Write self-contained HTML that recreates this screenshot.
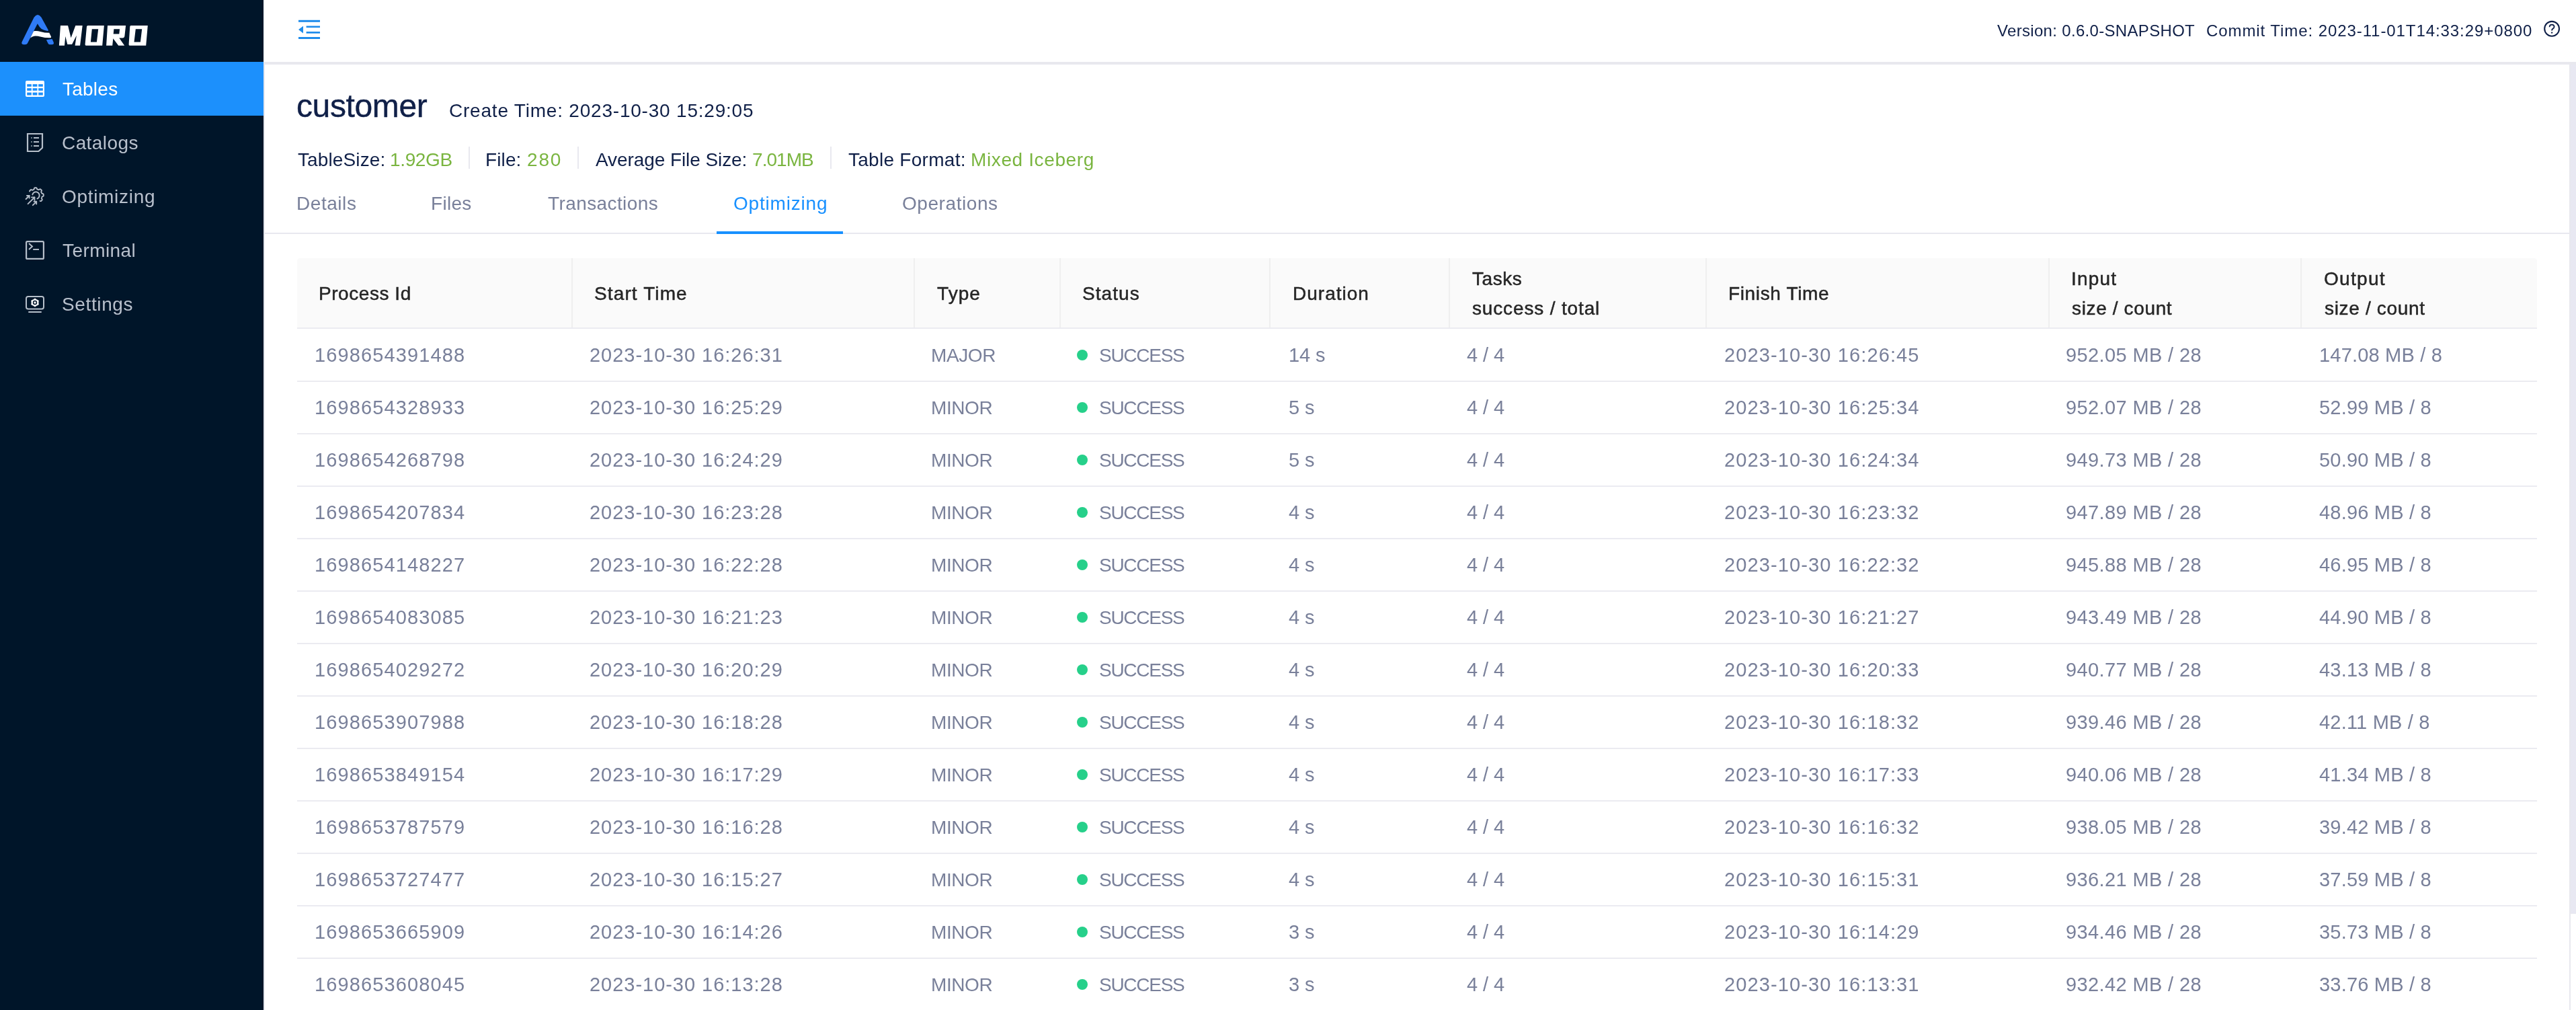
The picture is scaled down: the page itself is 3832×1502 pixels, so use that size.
<!DOCTYPE html>
<html><head><meta charset="utf-8"><title>Amoro</title>
<style>
html,body{margin:0;padding:0;}
body{width:3832px;height:1502px;overflow:hidden;position:relative;background:#fff;font-family:"Liberation Sans",sans-serif;}
.t{position:absolute;white-space:pre;line-height:1;will-change:transform;}
.abs{position:absolute;}
</style></head><body>
<div class="abs" style="left:0;top:0;width:392px;height:1502px;background:#001529"></div>
<svg class="abs" style="left:0;top:0" width="392" height="92" viewBox="0 0 392 92">
<g transform="translate(28,18) scale(0.051467)">
<path fill="#2f7bf6" d="M90,860 L440,150 Q545,10 650,150 L850,515 Q862,548 825,542 Q720,528 655,485 Q600,445 540,335 L250,905 Q232,937 185,937 L135,937 Q62,930 90,860 Z"/>
<path fill="#2f7bf6" d="M795,800 L962,778 L1005,868 Q1025,937 955,937 L890,937 Q858,937 842,900 Z"/>
<path fill="#ffffff" d="M430,548 Q520,532 640,566 Q750,600 880,598 L935,712 Q942,745 900,745 Q760,748 640,716 Q520,684 440,695 Q380,705 333,748 Z"/>
</g>
<path fill="#ffffff" d="M89.95,37.95 L101.05,37.95 L105.56,56.2 L112.34,37.95 L122.68,37.95 L119.1,67.86 L111.58,67.86 L113.84,52.81 L107.07,65.98 L100.3,65.98 L97.29,53.94 L95.97,67.86 L87.88,67.86 Z"/>
<path fill="#ffffff" fill-rule="evenodd" d="M130.6,37.95 L154.85,37.95 L152.2,67.86 L128.0,67.86 Q126.4,67.6 126.6,65.8 L129.0,39.6 Q129.3,38.1 130.6,37.95 Z M136.8,43.2 L134.9,62.6 L143.9,62.6 L146.2,43.2 Z"/>
<path fill="#ffffff" fill-rule="evenodd" d="M160.0,37.95 L187.1,37.95 L185.4,53.6 Q185.0,56.6 182.3,56.6 L177.3,56.6 L185.2,67.86 L176.2,67.86 L168.3,57.3 L167.2,67.86 L158.1,67.86 Z M169.4,43.2 L168.7,50.55 L177.3,50.55 L178.1,43.2 Z"/>
<path fill="#ffffff" fill-rule="evenodd" d="M194.6,37.95 L219.8,37.95 L217.2,67.86 L192.8,67.86 Q191.4,67.6 191.6,65.8 L193.3,39.6 Q193.5,38.1 194.6,37.95 Z M201.8,43.2 L199.5,62.6 L208.9,62.6 L211.2,43.2 Z"/>
</svg>
<div class="abs" style="left:0;top:92px;width:392px;height:80px;background:#1c90fc"></div>
<svg class="abs" style="left:0;top:92px" width="100" height="400" viewBox="0 92 100 400">
<rect x="38" y="120" width="28" height="24" rx="2" fill="#fff"/>
<g fill="#1c90fc">
<rect x="40.2" y="125.2" width="6.6" height="3.6"/><rect x="48.6" y="125.2" width="6.8" height="3.6"/><rect x="57.2" y="125.2" width="6.6" height="3.6"/>
<rect x="40.2" y="131.2" width="6.6" height="3.6"/><rect x="48.6" y="131.2" width="6.8" height="3.6"/><rect x="57.2" y="131.2" width="6.6" height="3.6"/>
<rect x="40.2" y="137.6" width="6.6" height="4.0"/><rect x="48.6" y="137.6" width="6.8" height="4.0"/><rect x="57.2" y="137.6" width="6.6" height="4.0"/>
</g>
<g fill="none" stroke="#b6bfca" stroke-width="2.2">
<path d="M41,199 L63,199 L63,219.7 L57.4,225 L41,225 Z"/>
</g>
<g fill="#b6bfca">
<rect x="46" y="204" width="2" height="2" opacity="0.6"/><rect x="50" y="204" width="8" height="2"/>
<rect x="46" y="210" width="2" height="2" opacity="0.6"/><rect x="50" y="210" width="8" height="2"/>
<rect x="46" y="216" width="2" height="2" opacity="0.6"/><rect x="50" y="216" width="8" height="2"/>
</g>
<g fill="none" stroke="#b6bfca" stroke-width="1.9" stroke-linecap="round" stroke-linejoin="round">
<path d="M44.03,284.52 L44.12,283.98 L44.42,283.58 L44.73,283.20 L45.06,282.83 L45.41,282.47 L45.77,282.13 L46.35,282.04 L47.19,282.37 L48.00,282.74 L48.47,282.71 L48.82,282.51 L49.18,282.31 L49.54,282.14 L49.92,281.98 L50.30,281.83 L50.59,281.41 L50.80,280.54 L51.08,279.68 L51.52,279.36 L52.01,279.28 L52.51,279.24 L53.00,279.21 L53.50,279.20 L54.00,279.22 L54.46,279.56 L54.84,280.39 L55.14,281.23 L55.49,281.54 L55.89,281.64 L56.27,281.76 L56.66,281.89 L57.03,282.04 L57.40,282.21 L57.91,282.11 L58.67,281.65 L59.48,281.23 L60.02,281.32 L60.42,281.62 L60.80,281.93 L61.17,282.26 L61.53,282.61 L61.87,282.97 L61.96,283.55 L61.63,284.39 L61.26,285.20 L61.29,285.67 L61.49,286.02 L61.69,286.38 L61.86,286.74 L62.02,287.12 L62.17,287.50 L62.59,287.79 L63.46,288.00 L64.32,288.28 L64.64,288.72 L64.72,289.21 L64.76,289.71 L64.79,290.20 L64.80,290.70 L64.78,291.20 L64.44,291.66 L63.61,292.04 L62.77,292.34 L62.46,292.69 L62.36,293.09 L62.24,293.47 L62.11,293.86 L61.96,294.23 L61.79,294.60 L61.89,295.11 L62.35,295.87 L62.77,296.68 L62.68,297.22 L62.38,297.62 L62.07,298.00 L61.74,298.37 L61.39,298.73 L61.03,299.07 L60.45,299.16 L59.61,298.83"/>
<path d="M48.33,289.43 L48.48,288.92 L48.68,288.43 L48.92,287.96 L49.21,287.51 L49.55,287.10 L49.93,286.73 L50.34,286.40 L50.78,286.11 L51.26,285.86 L51.75,285.67 L52.26,285.53 L52.78,285.44 L53.31,285.40 L53.84,285.42 L54.37,285.49 L54.89,285.62 L55.39,285.79 L55.87,286.02 L56.32,286.30 L56.74,286.62 L57.13,286.98 L57.48,287.38 L57.79,287.81 L58.05,288.27 L58.26,288.76 L58.43,289.26 L58.54,289.78 L58.59,290.31 L58.59,290.84 L58.54,291.37 L58.44,291.89 L58.28,292.40 L58.07,292.88 L57.81,293.35 L57.51,293.78 L57.17,294.19 L56.78,294.55 L56.36,294.88 L55.91,295.15 L55.43,295.39"/>
<path d="M38.6,296.0 L43.6,291.0"/><path d="M40.00,291.00 L43.6,291.0 L43.60,294.60"/><path d="M41.6,303.2 L51.4,293.4"/><path d="M47.00,293.40 L51.4,293.4 L51.40,297.80"/><path d="M48.8,305.2 L54.2,299.8"/><path d="M50.60,299.80 L54.2,299.8 L54.20,303.40"/>
</g>
<g fill="none" stroke="#b6bfca" stroke-width="2.2">
<rect x="39.1" y="359.1" width="25.8" height="25.8" rx="1.5"/>
<path d="M43,362 L48,366.5 L43,371" stroke-width="2"/>
</g>
<rect x="49.2" y="370" width="8.8" height="1.9" fill="#b6bfca"/>
<g fill="none" stroke="#b6bfca" stroke-width="2">
<rect x="39" y="441" width="26" height="18.6" rx="3"/>
</g>
<rect x="42" y="463" width="20" height="2" rx="1" fill="#b6bfca"/>
<g transform="translate(52,450)">
<path fill="#fff" stroke="#fff" stroke-width="0.8" stroke-linejoin="round" d="M0.00,-6.10 L2.50,-4.33 L5.28,-3.05 L5.00,0.00 L5.28,3.05 L2.50,4.33 L0.00,6.10 L-2.50,4.33 L-5.28,3.05 L-5.00,0.00 L-5.28,-3.05 L-2.50,-4.33 Z"/>
<circle r="3.2" fill="#001529"/><circle r="1.7" fill="#fff"/>
</g>
</svg>
<div class="abs" style="left:392px;top:92px;width:3440px;height:1410px;background:#e8e8ee"></div>
<div class="abs" style="left:394px;top:96px;width:3428px;height:1406px;background:#fff"></div>
<div class="abs" style="left:3824px;top:96px;width:8px;height:1263px;background:#e8e8f2;border-radius:0 0 4px 4px"></div>
<div class="abs" style="left:3824px;top:1359px;width:8px;height:143px;background:#fff"></div>
<svg class="abs" style="left:440px;top:26px" width="40" height="36" viewBox="440 26 40 36">
<g fill="#1f8ceb"><rect x="444" y="29.8" width="32" height="3"/><rect x="455.6" y="38.5" width="20.4" height="2.6"/><rect x="455.6" y="47" width="20.4" height="2.7"/><rect x="444" y="55" width="32" height="3"/>
<path d="M444,44.1 L451,38.8 L451,49.4 Z"/></g></svg>
<svg class="abs" style="left:3780px;top:28px" width="32" height="32" viewBox="3780 28 32 32">
<circle cx="3796.1" cy="42.8" r="10.9" fill="none" stroke="#102048" stroke-width="2.1"/>
<path d="M3792.6,40.2 Q3792.8,36.6 3796.2,36.6 Q3799.6,36.8 3799.6,39.8 Q3799.5,41.8 3797.4,42.9 Q3796.1,43.7 3796.1,45.4" fill="none" stroke="#102048" stroke-width="1.9"/>
<circle cx="3796.1" cy="48.6" r="1.2" fill="#102048"/>
</svg>
<div class="abs" style="left:697px;top:218px;width:2px;height:33px;background:#e8e8ef"></div>
<div class="abs" style="left:859px;top:218px;width:2px;height:33px;background:#e8e8ef"></div>
<div class="abs" style="left:1235px;top:218px;width:2px;height:33px;background:#e8e8ef"></div>
<div class="abs" style="left:394px;top:346px;width:3428px;height:2px;background:#e8e8ef"></div>
<div class="abs" style="left:1066px;top:344px;width:188px;height:4px;background:#1890ff"></div>
<div class="abs" style="left:442px;top:384px;width:3332px;height:105px;background:#fafafa;border-radius:4px 4px 0 0"></div>
<div class="abs" style="left:850px;top:384px;width:2px;height:103px;background:#efefef"></div>
<div class="abs" style="left:1359px;top:384px;width:2px;height:103px;background:#efefef"></div>
<div class="abs" style="left:1576px;top:384px;width:2px;height:103px;background:#efefef"></div>
<div class="abs" style="left:1888px;top:384px;width:2px;height:103px;background:#efefef"></div>
<div class="abs" style="left:2155px;top:384px;width:2px;height:103px;background:#efefef"></div>
<div class="abs" style="left:2537px;top:384px;width:2px;height:103px;background:#efefef"></div>
<div class="abs" style="left:3047px;top:384px;width:2px;height:103px;background:#efefef"></div>
<div class="abs" style="left:3422px;top:384px;width:2px;height:103px;background:#efefef"></div>
<div class="abs" style="left:442px;top:487px;width:3332px;height:2px;background:#ebebf1"></div>
<div class="t" style="left:93.10px;top:119.10px;font-size:28px;color:#ffffff;letter-spacing:0.240px;">Tables</div>
<div class="t" style="left:92.10px;top:199.20px;font-size:28px;color:#b8c0cc;letter-spacing:0.414px;">Catalogs</div>
<div class="t" style="left:92.30px;top:279.20px;font-size:28px;color:#b8c0cc;letter-spacing:0.689px;">Optimizing</div>
<div class="t" style="left:92.90px;top:359.20px;font-size:28px;color:#b8c0cc;letter-spacing:0.414px;">Terminal</div>
<div class="t" style="left:92.30px;top:439.20px;font-size:28px;color:#b8c0cc;letter-spacing:0.629px;">Settings</div>
<div class="t" style="left:2971.00px;top:34.23px;font-size:24px;color:#102048;letter-spacing:0.318px;">Version: 0.6.0-SNAPSHOT</div>
<div class="t" style="left:3282.10px;top:34.23px;font-size:24px;color:#102048;letter-spacing:0.921px;">Commit Time: 2023-11-01T14:33:29+0800</div>
<div class="t" style="left:441.10px;top:133.67px;font-size:48px;color:#102048;letter-spacing:-0.386px;-webkit-text-stroke:0.4px #102048;">customer</div>
<div class="t" style="left:668.30px;top:151.10px;font-size:28px;color:#102048;letter-spacing:0.790px;">Create Time: 2023-10-30 15:29:05</div>
<div class="t" style="left:442.90px;top:223.50px;font-size:28px;color:#102048;letter-spacing:0.122px;">TableSize:</div>
<div class="t" style="left:579.80px;top:223.50px;font-size:28px;color:#7ab540;letter-spacing:-0.360px;">1.92GB</div>
<div class="t" style="left:722.30px;top:223.50px;font-size:28px;color:#102048;letter-spacing:0.113px;">File:</div>
<div class="t" style="left:783.50px;top:223.50px;font-size:28px;color:#7ab540;letter-spacing:1.850px;">280</div>
<div class="t" style="left:885.70px;top:223.50px;font-size:28px;color:#102048;letter-spacing:-0.082px;">Average File Size:</div>
<div class="t" style="left:1119.00px;top:223.50px;font-size:28px;color:#7ab540;letter-spacing:-0.940px;">7.01MB</div>
<div class="t" style="left:1262.30px;top:223.50px;font-size:28px;color:#102048;letter-spacing:0.275px;">Table Format:</div>
<div class="t" style="left:1444.25px;top:223.50px;font-size:28px;color:#7ab540;letter-spacing:0.621px;">Mixed Iceberg</div>
<div class="t" style="left:441.00px;top:289.30px;font-size:28px;color:#79809a;letter-spacing:0.550px;">Details</div>
<div class="t" style="left:641.30px;top:289.30px;font-size:28px;color:#79809a;letter-spacing:0.300px;">Files</div>
<div class="t" style="left:814.70px;top:289.30px;font-size:28px;color:#79809a;letter-spacing:0.400px;">Transactions</div>
<div class="t" style="left:1091.10px;top:289.30px;font-size:28px;color:#1890ff;letter-spacing:0.811px;">Optimizing</div>
<div class="t" style="left:1342.40px;top:289.30px;font-size:28px;color:#79809a;letter-spacing:0.567px;">Operations</div>
<div class="t" style="left:473.90px;top:423.10px;font-size:28px;color:#262626;letter-spacing:0.556px;-webkit-text-stroke:0.5px #262626;">Process Id</div>
<div class="t" style="left:884.00px;top:423.10px;font-size:28px;color:#262626;letter-spacing:1.122px;-webkit-text-stroke:0.5px #262626;">Start Time</div>
<div class="t" style="left:1394.30px;top:423.10px;font-size:28px;color:#262626;letter-spacing:1.067px;-webkit-text-stroke:0.5px #262626;">Type</div>
<div class="t" style="left:1610.20px;top:423.10px;font-size:28px;color:#262626;letter-spacing:1.060px;-webkit-text-stroke:0.5px #262626;">Status</div>
<div class="t" style="left:1923.00px;top:423.10px;font-size:28px;color:#262626;letter-spacing:1.014px;-webkit-text-stroke:0.5px #262626;">Duration</div>
<div class="t" style="left:2190.10px;top:401.10px;font-size:28px;color:#262626;letter-spacing:0.550px;-webkit-text-stroke:0.5px #262626;">Tasks</div>
<div class="t" style="left:2190.20px;top:445.10px;font-size:28px;color:#262626;letter-spacing:0.850px;-webkit-text-stroke:0.5px #262626;">success / total</div>
<div class="t" style="left:2570.90px;top:423.10px;font-size:28px;color:#262626;letter-spacing:0.650px;-webkit-text-stroke:0.5px #262626;">Finish Time</div>
<div class="t" style="left:3080.60px;top:401.10px;font-size:28px;color:#262626;letter-spacing:1.175px;-webkit-text-stroke:0.5px #262626;">Input</div>
<div class="t" style="left:3082.20px;top:445.10px;font-size:28px;color:#262626;letter-spacing:0.636px;-webkit-text-stroke:0.5px #262626;">size / count</div>
<div class="t" style="left:3456.70px;top:401.10px;font-size:28px;color:#262626;letter-spacing:1.300px;-webkit-text-stroke:0.5px #262626;">Output</div>
<div class="t" style="left:3457.70px;top:445.10px;font-size:28px;color:#262626;letter-spacing:0.673px;-webkit-text-stroke:0.5px #262626;">size / count</div>
<div class="t" style="left:467.70px;top:514.45px;font-size:29px;color:#79809a;letter-spacing:1.125px;">1698654391488</div>
<div class="t" style="left:877.00px;top:514.45px;font-size:29px;color:#79809a;letter-spacing:0.972px;">2023-10-30 16:26:31</div>
<div class="t" style="left:1385.25px;top:515.30px;font-size:28px;color:#79809a;letter-spacing:-0.413px;">MAJOR</div>
<div class="t" style="left:1634.65px;top:515.30px;font-size:28px;color:#79809a;letter-spacing:-1.275px;">SUCCESS</div>
<div class="t" style="left:1916.90px;top:514.45px;font-size:29px;color:#79809a;letter-spacing:-0.100px;">14 s</div>
<div class="t" style="left:2182.30px;top:514.45px;font-size:29px;color:#79809a;letter-spacing:-0.100px;">4 / 4</div>
<div class="t" style="left:2564.50px;top:514.45px;font-size:29px;color:#79809a;letter-spacing:1.122px;">2023-10-30 16:26:45</div>
<div class="t" style="left:3073.20px;top:514.45px;font-size:29px;color:#79809a;letter-spacing:0.377px;">952.05 MB / 28</div>
<div class="t" style="left:3449.90px;top:514.45px;font-size:29px;color:#79809a;letter-spacing:0.192px;">147.08 MB / 8</div>
<div class="abs" style="left:1602px;top:520.00px;width:16px;height:16px;border-radius:50%;background:#26d08a"></div>
<div class="abs" style="left:442px;top:566px;width:3332px;height:2px;background:#ebebf1"></div>
<div class="t" style="left:467.70px;top:592.45px;font-size:29px;color:#79809a;letter-spacing:1.125px;">1698654328933</div>
<div class="t" style="left:877.00px;top:592.45px;font-size:29px;color:#79809a;letter-spacing:0.972px;">2023-10-30 16:25:29</div>
<div class="t" style="left:1385.25px;top:593.30px;font-size:28px;color:#79809a;letter-spacing:-0.413px;">MINOR</div>
<div class="t" style="left:1634.65px;top:593.30px;font-size:28px;color:#79809a;letter-spacing:-1.275px;">SUCCESS</div>
<div class="t" style="left:1916.90px;top:592.45px;font-size:29px;color:#79809a;letter-spacing:-0.100px;">5 s</div>
<div class="t" style="left:2182.30px;top:592.45px;font-size:29px;color:#79809a;letter-spacing:-0.100px;">4 / 4</div>
<div class="t" style="left:2564.50px;top:592.45px;font-size:29px;color:#79809a;letter-spacing:1.122px;">2023-10-30 16:25:34</div>
<div class="t" style="left:3073.20px;top:592.45px;font-size:29px;color:#79809a;letter-spacing:0.377px;">952.07 MB / 28</div>
<div class="t" style="left:3449.90px;top:592.45px;font-size:29px;color:#79809a;letter-spacing:0.192px;">52.99 MB / 8</div>
<div class="abs" style="left:1602px;top:598.00px;width:16px;height:16px;border-radius:50%;background:#26d08a"></div>
<div class="abs" style="left:442px;top:644px;width:3332px;height:2px;background:#ebebf1"></div>
<div class="t" style="left:467.70px;top:670.45px;font-size:29px;color:#79809a;letter-spacing:1.125px;">1698654268798</div>
<div class="t" style="left:877.00px;top:670.45px;font-size:29px;color:#79809a;letter-spacing:0.972px;">2023-10-30 16:24:29</div>
<div class="t" style="left:1385.25px;top:671.30px;font-size:28px;color:#79809a;letter-spacing:-0.413px;">MINOR</div>
<div class="t" style="left:1634.65px;top:671.30px;font-size:28px;color:#79809a;letter-spacing:-1.275px;">SUCCESS</div>
<div class="t" style="left:1916.90px;top:670.45px;font-size:29px;color:#79809a;letter-spacing:-0.100px;">5 s</div>
<div class="t" style="left:2182.30px;top:670.45px;font-size:29px;color:#79809a;letter-spacing:-0.100px;">4 / 4</div>
<div class="t" style="left:2564.50px;top:670.45px;font-size:29px;color:#79809a;letter-spacing:1.122px;">2023-10-30 16:24:34</div>
<div class="t" style="left:3073.20px;top:670.45px;font-size:29px;color:#79809a;letter-spacing:0.377px;">949.73 MB / 28</div>
<div class="t" style="left:3449.90px;top:670.45px;font-size:29px;color:#79809a;letter-spacing:0.192px;">50.90 MB / 8</div>
<div class="abs" style="left:1602px;top:676.00px;width:16px;height:16px;border-radius:50%;background:#26d08a"></div>
<div class="abs" style="left:442px;top:722px;width:3332px;height:2px;background:#ebebf1"></div>
<div class="t" style="left:467.70px;top:748.45px;font-size:29px;color:#79809a;letter-spacing:1.125px;">1698654207834</div>
<div class="t" style="left:877.00px;top:748.45px;font-size:29px;color:#79809a;letter-spacing:0.972px;">2023-10-30 16:23:28</div>
<div class="t" style="left:1385.25px;top:749.30px;font-size:28px;color:#79809a;letter-spacing:-0.413px;">MINOR</div>
<div class="t" style="left:1634.65px;top:749.30px;font-size:28px;color:#79809a;letter-spacing:-1.275px;">SUCCESS</div>
<div class="t" style="left:1916.90px;top:748.45px;font-size:29px;color:#79809a;letter-spacing:-0.100px;">4 s</div>
<div class="t" style="left:2182.30px;top:748.45px;font-size:29px;color:#79809a;letter-spacing:-0.100px;">4 / 4</div>
<div class="t" style="left:2564.50px;top:748.45px;font-size:29px;color:#79809a;letter-spacing:1.122px;">2023-10-30 16:23:32</div>
<div class="t" style="left:3073.20px;top:748.45px;font-size:29px;color:#79809a;letter-spacing:0.377px;">947.89 MB / 28</div>
<div class="t" style="left:3449.90px;top:748.45px;font-size:29px;color:#79809a;letter-spacing:0.192px;">48.96 MB / 8</div>
<div class="abs" style="left:1602px;top:754.00px;width:16px;height:16px;border-radius:50%;background:#26d08a"></div>
<div class="abs" style="left:442px;top:800px;width:3332px;height:2px;background:#ebebf1"></div>
<div class="t" style="left:467.70px;top:826.45px;font-size:29px;color:#79809a;letter-spacing:1.125px;">1698654148227</div>
<div class="t" style="left:877.00px;top:826.45px;font-size:29px;color:#79809a;letter-spacing:0.972px;">2023-10-30 16:22:28</div>
<div class="t" style="left:1385.25px;top:827.30px;font-size:28px;color:#79809a;letter-spacing:-0.413px;">MINOR</div>
<div class="t" style="left:1634.65px;top:827.30px;font-size:28px;color:#79809a;letter-spacing:-1.275px;">SUCCESS</div>
<div class="t" style="left:1916.90px;top:826.45px;font-size:29px;color:#79809a;letter-spacing:-0.100px;">4 s</div>
<div class="t" style="left:2182.30px;top:826.45px;font-size:29px;color:#79809a;letter-spacing:-0.100px;">4 / 4</div>
<div class="t" style="left:2564.50px;top:826.45px;font-size:29px;color:#79809a;letter-spacing:1.122px;">2023-10-30 16:22:32</div>
<div class="t" style="left:3073.20px;top:826.45px;font-size:29px;color:#79809a;letter-spacing:0.377px;">945.88 MB / 28</div>
<div class="t" style="left:3449.90px;top:826.45px;font-size:29px;color:#79809a;letter-spacing:0.192px;">46.95 MB / 8</div>
<div class="abs" style="left:1602px;top:832.00px;width:16px;height:16px;border-radius:50%;background:#26d08a"></div>
<div class="abs" style="left:442px;top:878px;width:3332px;height:2px;background:#ebebf1"></div>
<div class="t" style="left:467.70px;top:904.45px;font-size:29px;color:#79809a;letter-spacing:1.125px;">1698654083085</div>
<div class="t" style="left:877.00px;top:904.45px;font-size:29px;color:#79809a;letter-spacing:0.972px;">2023-10-30 16:21:23</div>
<div class="t" style="left:1385.25px;top:905.30px;font-size:28px;color:#79809a;letter-spacing:-0.413px;">MINOR</div>
<div class="t" style="left:1634.65px;top:905.30px;font-size:28px;color:#79809a;letter-spacing:-1.275px;">SUCCESS</div>
<div class="t" style="left:1916.90px;top:904.45px;font-size:29px;color:#79809a;letter-spacing:-0.100px;">4 s</div>
<div class="t" style="left:2182.30px;top:904.45px;font-size:29px;color:#79809a;letter-spacing:-0.100px;">4 / 4</div>
<div class="t" style="left:2564.50px;top:904.45px;font-size:29px;color:#79809a;letter-spacing:1.122px;">2023-10-30 16:21:27</div>
<div class="t" style="left:3073.20px;top:904.45px;font-size:29px;color:#79809a;letter-spacing:0.377px;">943.49 MB / 28</div>
<div class="t" style="left:3449.90px;top:904.45px;font-size:29px;color:#79809a;letter-spacing:0.192px;">44.90 MB / 8</div>
<div class="abs" style="left:1602px;top:910.00px;width:16px;height:16px;border-radius:50%;background:#26d08a"></div>
<div class="abs" style="left:442px;top:956px;width:3332px;height:2px;background:#ebebf1"></div>
<div class="t" style="left:467.70px;top:982.45px;font-size:29px;color:#79809a;letter-spacing:1.125px;">1698654029272</div>
<div class="t" style="left:877.00px;top:982.45px;font-size:29px;color:#79809a;letter-spacing:0.972px;">2023-10-30 16:20:29</div>
<div class="t" style="left:1385.25px;top:983.30px;font-size:28px;color:#79809a;letter-spacing:-0.413px;">MINOR</div>
<div class="t" style="left:1634.65px;top:983.30px;font-size:28px;color:#79809a;letter-spacing:-1.275px;">SUCCESS</div>
<div class="t" style="left:1916.90px;top:982.45px;font-size:29px;color:#79809a;letter-spacing:-0.100px;">4 s</div>
<div class="t" style="left:2182.30px;top:982.45px;font-size:29px;color:#79809a;letter-spacing:-0.100px;">4 / 4</div>
<div class="t" style="left:2564.50px;top:982.45px;font-size:29px;color:#79809a;letter-spacing:1.122px;">2023-10-30 16:20:33</div>
<div class="t" style="left:3073.20px;top:982.45px;font-size:29px;color:#79809a;letter-spacing:0.377px;">940.77 MB / 28</div>
<div class="t" style="left:3449.90px;top:982.45px;font-size:29px;color:#79809a;letter-spacing:0.192px;">43.13 MB / 8</div>
<div class="abs" style="left:1602px;top:988.00px;width:16px;height:16px;border-radius:50%;background:#26d08a"></div>
<div class="abs" style="left:442px;top:1034px;width:3332px;height:2px;background:#ebebf1"></div>
<div class="t" style="left:467.70px;top:1060.45px;font-size:29px;color:#79809a;letter-spacing:1.125px;">1698653907988</div>
<div class="t" style="left:877.00px;top:1060.45px;font-size:29px;color:#79809a;letter-spacing:0.972px;">2023-10-30 16:18:28</div>
<div class="t" style="left:1385.25px;top:1061.30px;font-size:28px;color:#79809a;letter-spacing:-0.413px;">MINOR</div>
<div class="t" style="left:1634.65px;top:1061.30px;font-size:28px;color:#79809a;letter-spacing:-1.275px;">SUCCESS</div>
<div class="t" style="left:1916.90px;top:1060.45px;font-size:29px;color:#79809a;letter-spacing:-0.100px;">4 s</div>
<div class="t" style="left:2182.30px;top:1060.45px;font-size:29px;color:#79809a;letter-spacing:-0.100px;">4 / 4</div>
<div class="t" style="left:2564.50px;top:1060.45px;font-size:29px;color:#79809a;letter-spacing:1.122px;">2023-10-30 16:18:32</div>
<div class="t" style="left:3073.20px;top:1060.45px;font-size:29px;color:#79809a;letter-spacing:0.377px;">939.46 MB / 28</div>
<div class="t" style="left:3449.90px;top:1060.45px;font-size:29px;color:#79809a;letter-spacing:0.192px;">42.11 MB / 8</div>
<div class="abs" style="left:1602px;top:1066.00px;width:16px;height:16px;border-radius:50%;background:#26d08a"></div>
<div class="abs" style="left:442px;top:1112px;width:3332px;height:2px;background:#ebebf1"></div>
<div class="t" style="left:467.70px;top:1138.45px;font-size:29px;color:#79809a;letter-spacing:1.125px;">1698653849154</div>
<div class="t" style="left:877.00px;top:1138.45px;font-size:29px;color:#79809a;letter-spacing:0.972px;">2023-10-30 16:17:29</div>
<div class="t" style="left:1385.25px;top:1139.30px;font-size:28px;color:#79809a;letter-spacing:-0.413px;">MINOR</div>
<div class="t" style="left:1634.65px;top:1139.30px;font-size:28px;color:#79809a;letter-spacing:-1.275px;">SUCCESS</div>
<div class="t" style="left:1916.90px;top:1138.45px;font-size:29px;color:#79809a;letter-spacing:-0.100px;">4 s</div>
<div class="t" style="left:2182.30px;top:1138.45px;font-size:29px;color:#79809a;letter-spacing:-0.100px;">4 / 4</div>
<div class="t" style="left:2564.50px;top:1138.45px;font-size:29px;color:#79809a;letter-spacing:1.122px;">2023-10-30 16:17:33</div>
<div class="t" style="left:3073.20px;top:1138.45px;font-size:29px;color:#79809a;letter-spacing:0.377px;">940.06 MB / 28</div>
<div class="t" style="left:3449.90px;top:1138.45px;font-size:29px;color:#79809a;letter-spacing:0.192px;">41.34 MB / 8</div>
<div class="abs" style="left:1602px;top:1144.00px;width:16px;height:16px;border-radius:50%;background:#26d08a"></div>
<div class="abs" style="left:442px;top:1190px;width:3332px;height:2px;background:#ebebf1"></div>
<div class="t" style="left:467.70px;top:1216.45px;font-size:29px;color:#79809a;letter-spacing:1.125px;">1698653787579</div>
<div class="t" style="left:877.00px;top:1216.45px;font-size:29px;color:#79809a;letter-spacing:0.972px;">2023-10-30 16:16:28</div>
<div class="t" style="left:1385.25px;top:1217.30px;font-size:28px;color:#79809a;letter-spacing:-0.413px;">MINOR</div>
<div class="t" style="left:1634.65px;top:1217.30px;font-size:28px;color:#79809a;letter-spacing:-1.275px;">SUCCESS</div>
<div class="t" style="left:1916.90px;top:1216.45px;font-size:29px;color:#79809a;letter-spacing:-0.100px;">4 s</div>
<div class="t" style="left:2182.30px;top:1216.45px;font-size:29px;color:#79809a;letter-spacing:-0.100px;">4 / 4</div>
<div class="t" style="left:2564.50px;top:1216.45px;font-size:29px;color:#79809a;letter-spacing:1.122px;">2023-10-30 16:16:32</div>
<div class="t" style="left:3073.20px;top:1216.45px;font-size:29px;color:#79809a;letter-spacing:0.377px;">938.05 MB / 28</div>
<div class="t" style="left:3449.90px;top:1216.45px;font-size:29px;color:#79809a;letter-spacing:0.192px;">39.42 MB / 8</div>
<div class="abs" style="left:1602px;top:1222.00px;width:16px;height:16px;border-radius:50%;background:#26d08a"></div>
<div class="abs" style="left:442px;top:1268px;width:3332px;height:2px;background:#ebebf1"></div>
<div class="t" style="left:467.70px;top:1294.45px;font-size:29px;color:#79809a;letter-spacing:1.125px;">1698653727477</div>
<div class="t" style="left:877.00px;top:1294.45px;font-size:29px;color:#79809a;letter-spacing:0.972px;">2023-10-30 16:15:27</div>
<div class="t" style="left:1385.25px;top:1295.30px;font-size:28px;color:#79809a;letter-spacing:-0.413px;">MINOR</div>
<div class="t" style="left:1634.65px;top:1295.30px;font-size:28px;color:#79809a;letter-spacing:-1.275px;">SUCCESS</div>
<div class="t" style="left:1916.90px;top:1294.45px;font-size:29px;color:#79809a;letter-spacing:-0.100px;">4 s</div>
<div class="t" style="left:2182.30px;top:1294.45px;font-size:29px;color:#79809a;letter-spacing:-0.100px;">4 / 4</div>
<div class="t" style="left:2564.50px;top:1294.45px;font-size:29px;color:#79809a;letter-spacing:1.122px;">2023-10-30 16:15:31</div>
<div class="t" style="left:3073.20px;top:1294.45px;font-size:29px;color:#79809a;letter-spacing:0.377px;">936.21 MB / 28</div>
<div class="t" style="left:3449.90px;top:1294.45px;font-size:29px;color:#79809a;letter-spacing:0.192px;">37.59 MB / 8</div>
<div class="abs" style="left:1602px;top:1300.00px;width:16px;height:16px;border-radius:50%;background:#26d08a"></div>
<div class="abs" style="left:442px;top:1346px;width:3332px;height:2px;background:#ebebf1"></div>
<div class="t" style="left:467.70px;top:1372.45px;font-size:29px;color:#79809a;letter-spacing:1.125px;">1698653665909</div>
<div class="t" style="left:877.00px;top:1372.45px;font-size:29px;color:#79809a;letter-spacing:0.972px;">2023-10-30 16:14:26</div>
<div class="t" style="left:1385.25px;top:1373.30px;font-size:28px;color:#79809a;letter-spacing:-0.413px;">MINOR</div>
<div class="t" style="left:1634.65px;top:1373.30px;font-size:28px;color:#79809a;letter-spacing:-1.275px;">SUCCESS</div>
<div class="t" style="left:1916.90px;top:1372.45px;font-size:29px;color:#79809a;letter-spacing:-0.100px;">3 s</div>
<div class="t" style="left:2182.30px;top:1372.45px;font-size:29px;color:#79809a;letter-spacing:-0.100px;">4 / 4</div>
<div class="t" style="left:2564.50px;top:1372.45px;font-size:29px;color:#79809a;letter-spacing:1.122px;">2023-10-30 16:14:29</div>
<div class="t" style="left:3073.20px;top:1372.45px;font-size:29px;color:#79809a;letter-spacing:0.377px;">934.46 MB / 28</div>
<div class="t" style="left:3449.90px;top:1372.45px;font-size:29px;color:#79809a;letter-spacing:0.192px;">35.73 MB / 8</div>
<div class="abs" style="left:1602px;top:1378.00px;width:16px;height:16px;border-radius:50%;background:#26d08a"></div>
<div class="abs" style="left:442px;top:1424px;width:3332px;height:2px;background:#ebebf1"></div>
<div class="t" style="left:467.70px;top:1450.45px;font-size:29px;color:#79809a;letter-spacing:1.125px;">1698653608045</div>
<div class="t" style="left:877.00px;top:1450.45px;font-size:29px;color:#79809a;letter-spacing:0.972px;">2023-10-30 16:13:28</div>
<div class="t" style="left:1385.25px;top:1451.30px;font-size:28px;color:#79809a;letter-spacing:-0.413px;">MINOR</div>
<div class="t" style="left:1634.65px;top:1451.30px;font-size:28px;color:#79809a;letter-spacing:-1.275px;">SUCCESS</div>
<div class="t" style="left:1916.90px;top:1450.45px;font-size:29px;color:#79809a;letter-spacing:-0.100px;">3 s</div>
<div class="t" style="left:2182.30px;top:1450.45px;font-size:29px;color:#79809a;letter-spacing:-0.100px;">4 / 4</div>
<div class="t" style="left:2564.50px;top:1450.45px;font-size:29px;color:#79809a;letter-spacing:1.122px;">2023-10-30 16:13:31</div>
<div class="t" style="left:3073.20px;top:1450.45px;font-size:29px;color:#79809a;letter-spacing:0.377px;">932.42 MB / 28</div>
<div class="t" style="left:3449.90px;top:1450.45px;font-size:29px;color:#79809a;letter-spacing:0.192px;">33.76 MB / 8</div>
<div class="abs" style="left:1602px;top:1456.00px;width:16px;height:16px;border-radius:50%;background:#26d08a"></div>
<div class="abs" style="left:442px;top:1502px;width:3332px;height:2px;background:#ebebf1"></div>
</body></html>
